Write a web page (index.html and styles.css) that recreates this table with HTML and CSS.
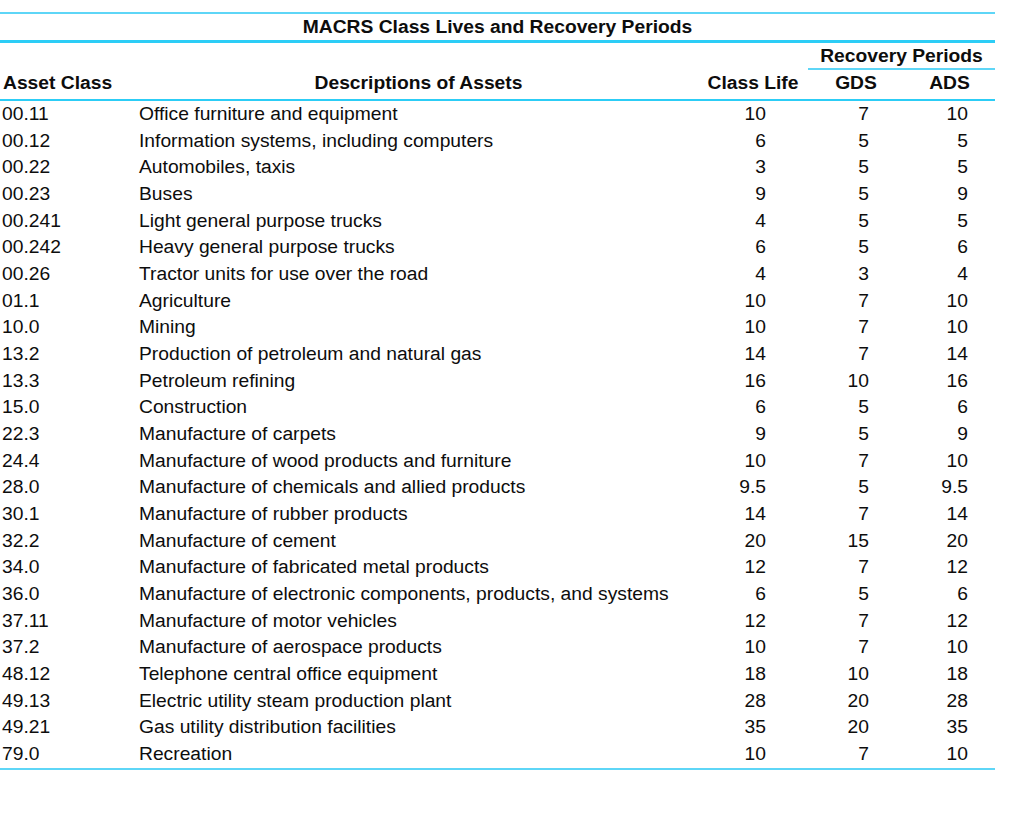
FILE: index.html
```html
<!DOCTYPE html>
<html lang="en">
<head>
<meta charset="utf-8">
<title>MACRS Class Lives and Recovery Periods</title>
<link rel="stylesheet" href="styles.css">
</head>
<body>
<div class="table">
  <div class="title-row">MACRS Class Lives and Recovery Periods</div>
  <div class="row group-row">
    <div class="cell"></div>
    <div class="cell"></div>
    <div class="cell"></div>
    <div class="cell group">Recovery Periods</div>
  </div>
  <div class="row head-row">
    <div class="cell c-class">Asset Class</div>
    <div class="cell c-desc">Descriptions of Assets</div>
    <div class="cell c-life">Class Life</div>
    <div class="cell c-gds">GDS</div>
    <div class="cell c-ads">ADS</div>
  </div>
  <div class="body">
    <div class="row"><div class="cell c-class">00.11</div><div class="cell c-desc">Office furniture and equipment</div><div class="cell c-life">10</div><div class="cell c-gds">7</div><div class="cell c-ads">10</div></div>
    <div class="row"><div class="cell c-class">00.12</div><div class="cell c-desc">Information systems, including computers</div><div class="cell c-life">6</div><div class="cell c-gds">5</div><div class="cell c-ads">5</div></div>
    <div class="row"><div class="cell c-class">00.22</div><div class="cell c-desc">Automobiles, taxis</div><div class="cell c-life">3</div><div class="cell c-gds">5</div><div class="cell c-ads">5</div></div>
    <div class="row"><div class="cell c-class">00.23</div><div class="cell c-desc">Buses</div><div class="cell c-life">9</div><div class="cell c-gds">5</div><div class="cell c-ads">9</div></div>
    <div class="row"><div class="cell c-class">00.241</div><div class="cell c-desc">Light general purpose trucks</div><div class="cell c-life">4</div><div class="cell c-gds">5</div><div class="cell c-ads">5</div></div>
    <div class="row"><div class="cell c-class">00.242</div><div class="cell c-desc">Heavy general purpose trucks</div><div class="cell c-life">6</div><div class="cell c-gds">5</div><div class="cell c-ads">6</div></div>
    <div class="row"><div class="cell c-class">00.26</div><div class="cell c-desc">Tractor units for use over the road</div><div class="cell c-life">4</div><div class="cell c-gds">3</div><div class="cell c-ads">4</div></div>
    <div class="row"><div class="cell c-class">01.1</div><div class="cell c-desc">Agriculture</div><div class="cell c-life">10</div><div class="cell c-gds">7</div><div class="cell c-ads">10</div></div>
    <div class="row"><div class="cell c-class">10.0</div><div class="cell c-desc">Mining</div><div class="cell c-life">10</div><div class="cell c-gds">7</div><div class="cell c-ads">10</div></div>
    <div class="row"><div class="cell c-class">13.2</div><div class="cell c-desc">Production of petroleum and natural gas</div><div class="cell c-life">14</div><div class="cell c-gds">7</div><div class="cell c-ads">14</div></div>
    <div class="row"><div class="cell c-class">13.3</div><div class="cell c-desc">Petroleum refining</div><div class="cell c-life">16</div><div class="cell c-gds">10</div><div class="cell c-ads">16</div></div>
    <div class="row"><div class="cell c-class">15.0</div><div class="cell c-desc">Construction</div><div class="cell c-life">6</div><div class="cell c-gds">5</div><div class="cell c-ads">6</div></div>
    <div class="row"><div class="cell c-class">22.3</div><div class="cell c-desc">Manufacture of carpets</div><div class="cell c-life">9</div><div class="cell c-gds">5</div><div class="cell c-ads">9</div></div>
    <div class="row"><div class="cell c-class">24.4</div><div class="cell c-desc">Manufacture of wood products and furniture</div><div class="cell c-life">10</div><div class="cell c-gds">7</div><div class="cell c-ads">10</div></div>
    <div class="row"><div class="cell c-class">28.0</div><div class="cell c-desc">Manufacture of chemicals and allied products</div><div class="cell c-life">9.5</div><div class="cell c-gds">5</div><div class="cell c-ads">9.5</div></div>
    <div class="row"><div class="cell c-class">30.1</div><div class="cell c-desc">Manufacture of rubber products</div><div class="cell c-life">14</div><div class="cell c-gds">7</div><div class="cell c-ads">14</div></div>
    <div class="row"><div class="cell c-class">32.2</div><div class="cell c-desc">Manufacture of cement</div><div class="cell c-life">20</div><div class="cell c-gds">15</div><div class="cell c-ads">20</div></div>
    <div class="row"><div class="cell c-class">34.0</div><div class="cell c-desc">Manufacture of fabricated metal products</div><div class="cell c-life">12</div><div class="cell c-gds">7</div><div class="cell c-ads">12</div></div>
    <div class="row"><div class="cell c-class">36.0</div><div class="cell c-desc">Manufacture of electronic components, products, and systems</div><div class="cell c-life">6</div><div class="cell c-gds">5</div><div class="cell c-ads">6</div></div>
    <div class="row"><div class="cell c-class">37.11</div><div class="cell c-desc">Manufacture of motor vehicles</div><div class="cell c-life">12</div><div class="cell c-gds">7</div><div class="cell c-ads">12</div></div>
    <div class="row"><div class="cell c-class">37.2</div><div class="cell c-desc">Manufacture of aerospace products</div><div class="cell c-life">10</div><div class="cell c-gds">7</div><div class="cell c-ads">10</div></div>
    <div class="row"><div class="cell c-class">48.12</div><div class="cell c-desc">Telephone central office equipment</div><div class="cell c-life">18</div><div class="cell c-gds">10</div><div class="cell c-ads">18</div></div>
    <div class="row"><div class="cell c-class">49.13</div><div class="cell c-desc">Electric utility steam production plant</div><div class="cell c-life">28</div><div class="cell c-gds">20</div><div class="cell c-ads">28</div></div>
    <div class="row"><div class="cell c-class">49.21</div><div class="cell c-desc">Gas utility distribution facilities</div><div class="cell c-life">35</div><div class="cell c-gds">20</div><div class="cell c-ads">35</div></div>
    <div class="row"><div class="cell c-class">79.0</div><div class="cell c-desc">Recreation</div><div class="cell c-life">10</div><div class="cell c-gds">7</div><div class="cell c-ads">10</div></div>
  </div>
</div>
</body>
</html>
```
FILE: styles.css
```css
html, body {
  margin: 0;
  padding: 0;
  background: #ffffff;
}
body {
  padding-top: 12px;
  font-family: "Liberation Sans", Arial, sans-serif;
  font-size: 19.25px;
  color: #0d0d0d;
}
.table {
  width: 995px;
  border-top: 2px solid #5ed6f7;
  border-bottom: 2px solid #5ed6f7;
}
.title-row {
  height: 26px;
  line-height: 26px;
  text-align: center;
  font-weight: bold;
  border-bottom: 3px solid #2ccdf6;
}
.row {
  display: grid;
  grid-template-columns: 137px 561px 110px 96px 91px;
}
.group-row {
  grid-template-columns: 137px 561px 110px 187px;
  height: 26px;
}
.group {
  font-weight: bold;
  text-align: center;
  line-height: 25px;
  border-bottom: 2px solid #5ed6f7;
}
.head-row {
  height: 30px;
  font-weight: bold;
  border-bottom: 2px solid #2ccdf6;
}
.head-row .cell {
  line-height: 28px;
  text-align: center;
}
.head-row .c-class {
  text-align: left;
  padding-left: 3px;
}
.body .row {
  height: 26.68px;
  line-height: 26.68px;
}
.c-class {
  padding-left: 2px;
}
.c-desc {
  padding-left: 2px;
  white-space: nowrap;
}
.body .c-life {
  text-align: right;
  padding-right: 42px;
}
.body .c-gds {
  text-align: right;
  padding-right: 35px;
}
.body .c-ads {
  text-align: right;
  padding-right: 27px;
}
```
